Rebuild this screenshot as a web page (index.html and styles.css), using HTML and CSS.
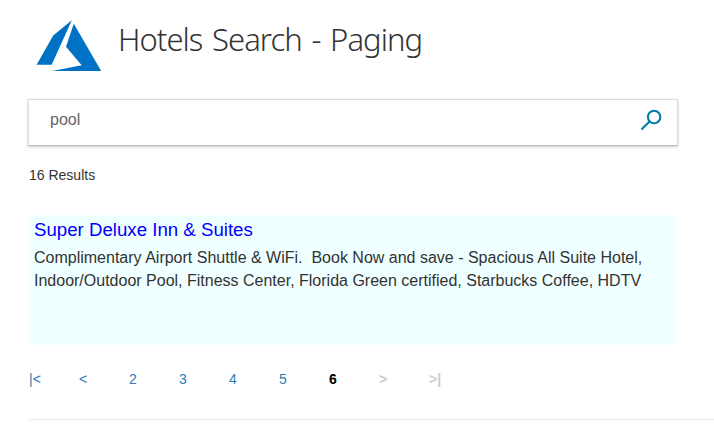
FILE: index.html
```html
<!DOCTYPE html>
<html lang="en">
<head>
<meta charset="utf-8">
<title>Hotels Search - Paging</title>
<link rel="stylesheet" href="styles.css">
</head>
<body>
<header class="header">
  <svg class="logo" width="66" height="52" viewBox="36 20 66 52" aria-hidden="true">
    <path d="M71.8 20.2 53.2 35.4 36.6 64.8H51.7Z"/>
    <path d="M73.8 23.8 66 46.7 81.7 65.3 52 70.9H101.2Z"/>
  </svg>
  <h1 class="title">Hotels Search - Paging</h1>
</header>
<main>
  <form class="search">
    <input class="search-input" type="text" value="pool" aria-label="Search">
    <button class="search-button" type="button" aria-label="Search">
      <svg width="22" height="22" viewBox="640 109 22 22">
        <circle cx="654.1" cy="117" r="6.2"/>
        <path d="M649.6 121.4 641.4 129.5"/>
      </svg>
    </button>
  </form>
  <p class="count">16 Results</p>
  <article class="result">
    <h2 class="name">Super Deluxe Inn &amp; Suites</h2>
    <p class="description">Complimentary Airport Shuttle &amp; WiFi.&nbsp; Book Now and save - Spacious All Suite Hotel,<br>Indoor/Outdoor Pool, Fitness Center, Florida Green certified, Starbucks Coffee, HDTV</p>
  </article>
  <nav class="pager">
    <a href="#">|&lt;</a>
    <a href="#">&lt;</a>
    <a href="#">2</a>
    <a href="#">3</a>
    <a href="#">4</a>
    <a href="#">5</a>
    <span class="current">6</span>
    <span class="disabled">&gt;</span>
    <span class="disabled">&gt;|</span>
  </nav>
</main>
<hr class="rule">
</body>
</html>
```
FILE: styles.css
```css
* { box-sizing: border-box; }
body {
  margin: 0;
  padding: 20px 0 0 29px;
  background: #fff;
  color: #333;
  font: 14px/20px "Liberation Sans", Arial, sans-serif;
}
h1, h2, p { margin: 0; font-weight: normal; }
.header { display: flex; height: 79px; padding-left: 7px; }
.logo { fill: #0072c6; flex: none; }
.title {
  margin-left: 16px;
  font: 300 31px/38px "Noto Sans", "Open Sans", sans-serif;
  letter-spacing: -0.95px;
  word-spacing: 2.5px;
  white-space: nowrap;
}
.search {
  display: flex;
  align-items: center;
  width: 650px;
  height: 47px;
  margin-left: -1px;
  border: 1px solid #ddd;
  border-bottom-color: #bbb;
  box-shadow: 0 1px 3px rgba(0, 0, 0, .2);
}
.search-input {
  flex: 1;
  min-width: 0;
  height: 38px;
  padding: 0 0 5px 21px;
  border: 0;
  outline: 0;
  background: transparent;
  color: #666;
  font: 16px "Liberation Sans", Arial, sans-serif;
}
.search-button {
  display: flex;
  margin: 0 15px 5px 0;
  padding: 0;
  border: 0;
  background: none;
}
.search-button svg { fill: none; stroke: #007daa; stroke-width: 2.1; }
.count { margin-top: 19px; }
.result {
  width: 648px;
  height: 130px;
  margin-top: 30px;
  padding: 3px 5px;
  background: #f0ffff;
}
.name { color: #00f; font-size: 18.66px; line-height: 24px; }
.description { margin-top: 4px; font-size: 16px; line-height: 23px; white-space: nowrap; }
.pager {
  display: grid;
  grid-template-columns: repeat(9, 50px);
  margin-top: 24px;
}
.pager a { color: #337ab7; text-decoration: none; }
.current { color: #000; font-weight: bold; }
.disabled { color: #ccc; font-weight: bold; }
.rule { height: 1px; margin: 30px 0 0; border: 0; background: #e8e8e8; }
```
